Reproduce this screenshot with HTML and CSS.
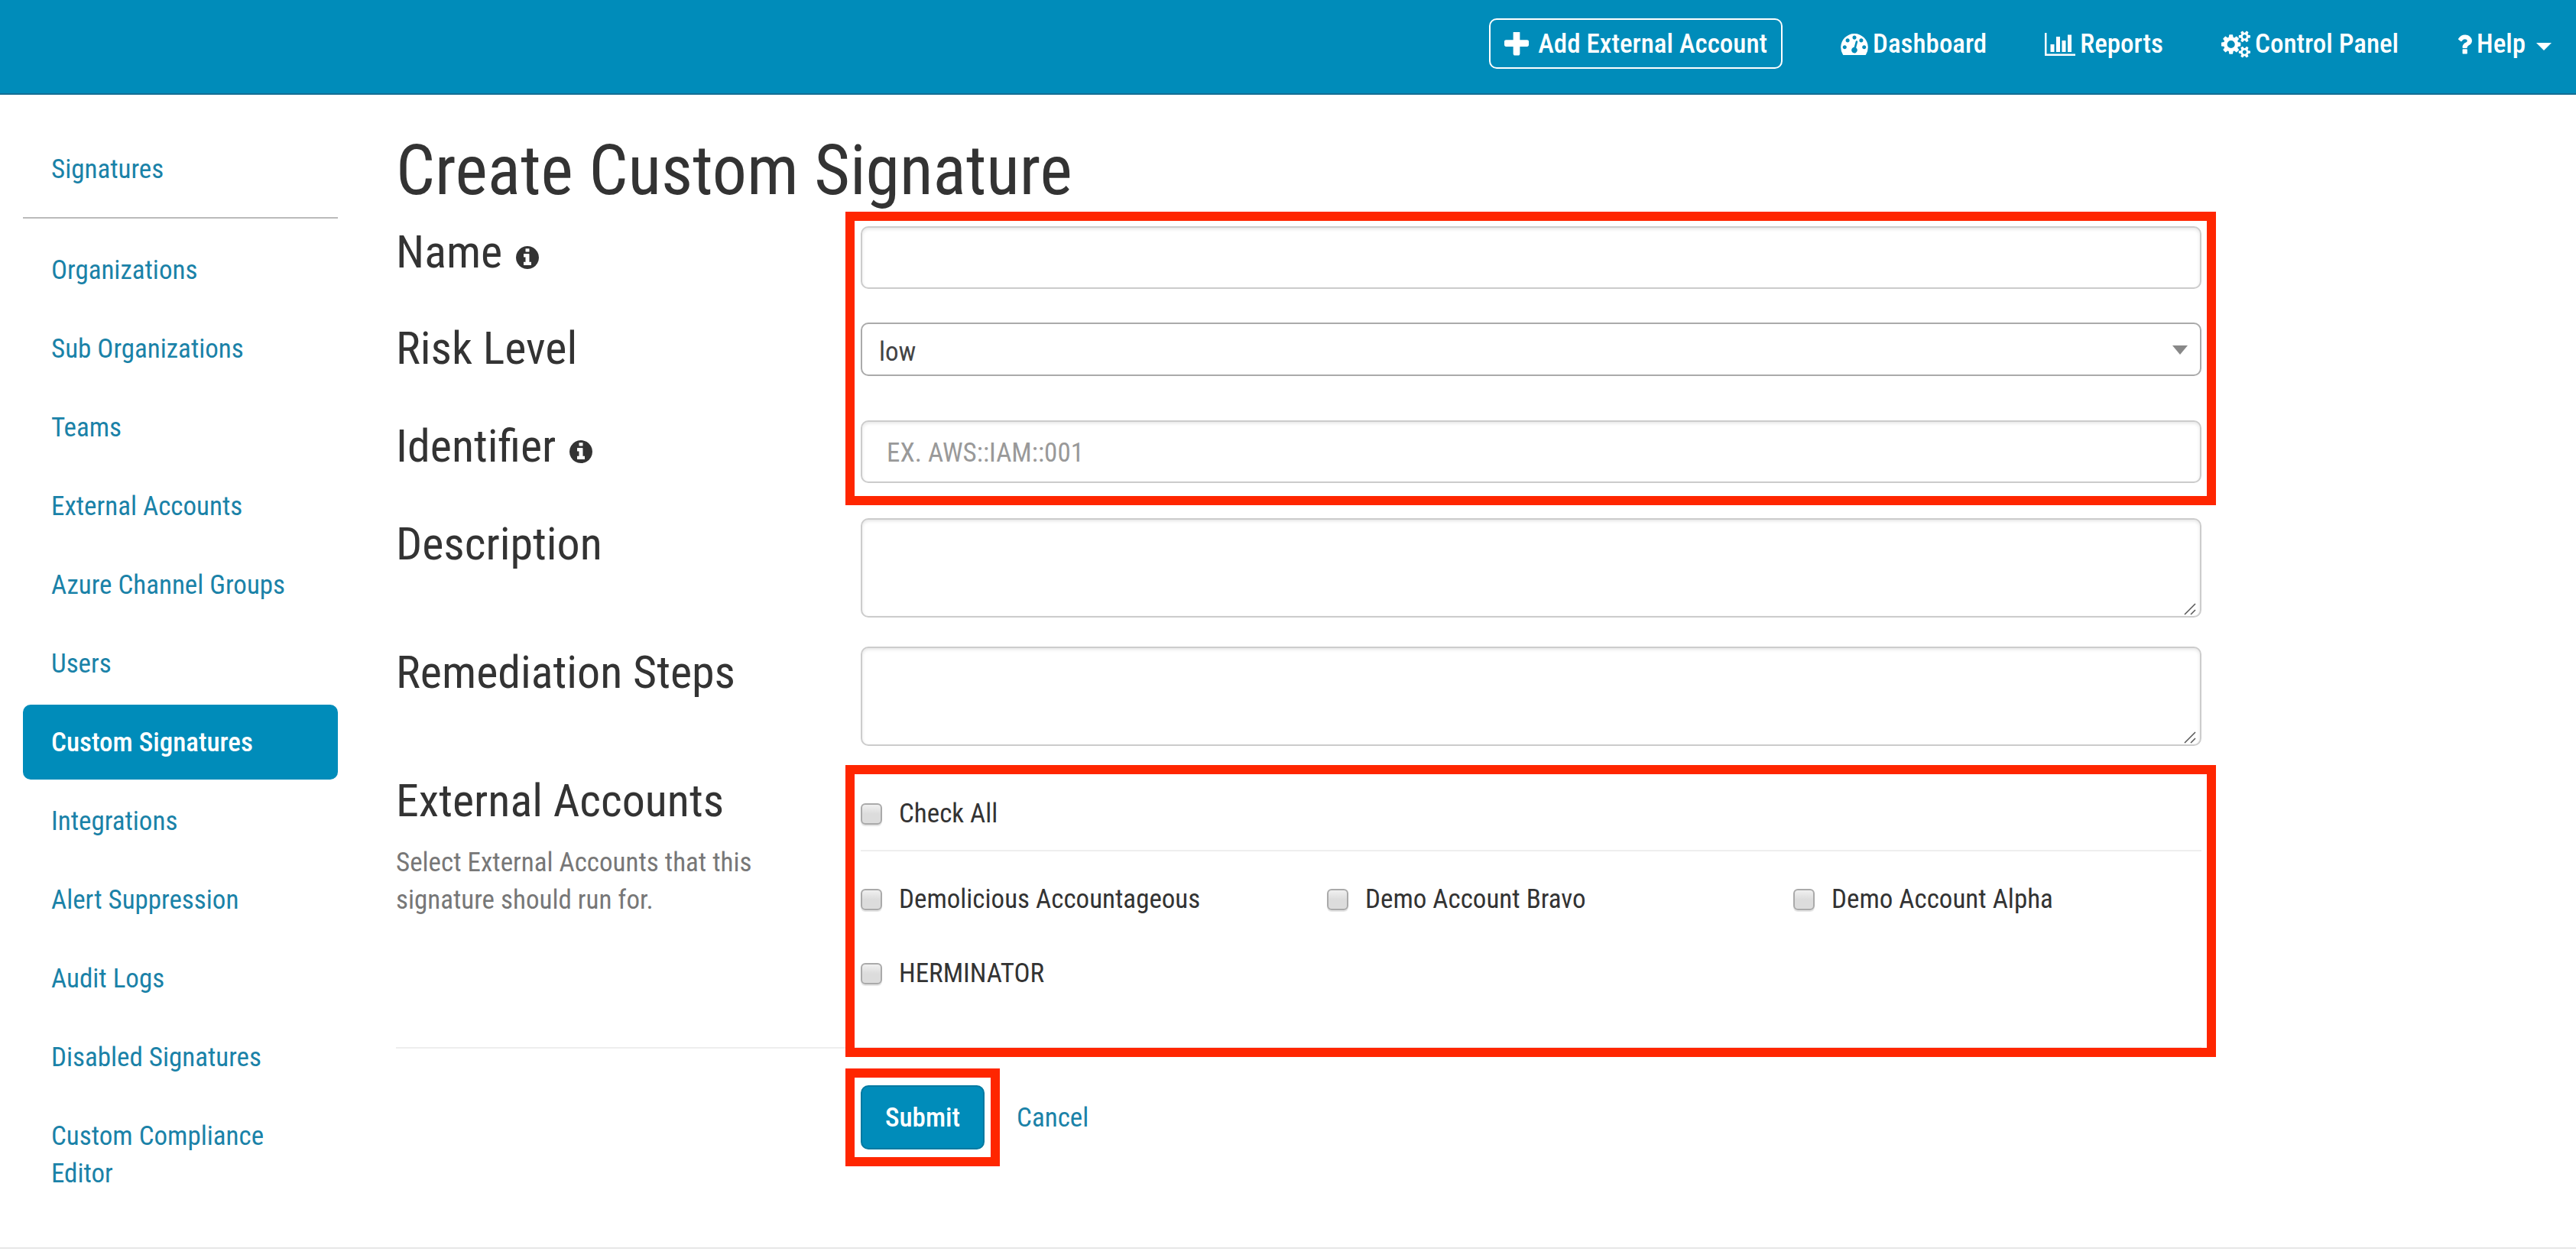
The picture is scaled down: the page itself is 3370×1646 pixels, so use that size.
FILE: index.html
```html
<!DOCTYPE html>
<html lang="en">
<head>
<meta charset="utf-8">
<meta name="viewport" content="width=device-width, initial-scale=1">
<title>Create Custom Signature</title>
<link rel="stylesheet" href="styles.css">
</head>
<body>
<header class="topbar">
  <nav class="topnav" aria-label="Main">
    <a class="topnav__link topnav__link--boxed" href="#"><svg class="icon-plus" viewBox="192 192 1408 1408" aria-hidden="true"><path d="M1600 736v192q0 40-28 68t-68 28h-416v416q0 40-28 68t-68 28h-192q-40 0-68-28t-28-68v-416h-416q-40 0-68-28t-28-68v-192q0-40 28-68t68-28h416v-416q0-40 28-68t68-28h192q40 0 68 28t28 68v416h416q40 0 68 28t28 68z"/></svg>Add External Account</a>
    <a class="topnav__link" href="#"><svg class="icon-dashboard" viewBox="0 256 1792 1408" aria-hidden="true"><path d="M384 1152q0-53-37.5-90.5t-90.5-37.5-90.5 37.5-37.5 90.5 37.5 90.5 90.5 37.5 90.5-37.5 37.5-90.5zm192-448q0-53-37.5-90.5t-90.5-37.5-90.5 37.5-37.5 90.5 37.5 90.5 90.5 37.5 90.5-37.5 37.5-90.5zm428 481l101-382q6-26-7.5-48.5t-38.5-29.5-48 6.5-30 39.5l-101 382q-60 5-107 43.5t-63 98.5q-20 77 20 146t117 89 146-20 89-117q16-60-6-117t-72-91zm660-33q0-53-37.5-90.5t-90.5-37.5-90.5 37.5-37.5 90.5 37.5 90.5 90.5 37.5 90.5-37.5 37.5-90.5zm-640-640q0-53-37.5-90.5t-90.5-37.5-90.5 37.5-37.5 90.5 37.5 90.5 90.5 37.5 90.5-37.5 37.5-90.5zm448 192q0-53-37.5-90.5t-90.5-37.5-90.5 37.5-37.5 90.5 37.5 90.5 90.5 37.5 90.5-37.5 37.5-90.5zm320 448q0 261-141 483-19 29-54 29h-1402q-35 0-54-29-141-221-141-483 0-182 71-348t191-286 286-191 348-71 348 71 286 191 191 286 71 348z"/></svg>Dashboard</a>
    <a class="topnav__link" href="#"><svg class="icon-chart" viewBox="0 128 2048 1536" aria-hidden="true"><path d="M640 896v512h-256v-512h256zm384-512v1024h-256v-1024h256zm1024 1152v128h-2048v-1536h128v1408h1920zm-640-896v768h-256v-768h256zm384-384v1152h-256v-1152h256z"/></svg>Reports</a>
    <a class="topnav__link" href="#"><svg class="icon-cogs" viewBox="0 0 1920 1792" aria-hidden="true"><path d="M896 896q0-106-75-181t-181-75-181 75-75 181 75 181 181 75 181-75 75-181zm768 512q0-52-38-90t-90-38-90 38-38 90q0 53 37.5 90.5t90.5 37.5 90.5-37.5 37.5-90.5zm0-1024q0-52-38-90t-90-38-90 38-38 90q0 53 37.5 90.5t90.5 37.5 90.5-37.5 37.5-90.5zm-384 421v185q0 10-7 19.5t-16 10.5l-155 24q-11 35-32 76 34 48 90 115 7 11 7 20 0 12-7 19-23 30-82.5 89.5t-78.5 59.5q-11 0-21-7l-115-90q-37 19-77 31-11 108-23 155-7 24-30 24h-186q-11 0-20-7.5t-10-17.5l-23-153q-34-10-75-31l-118 89q-7 7-20 7-11 0-21-8-144-133-144-160 0-9 7-19 10-14 41-53t47-61q-23-44-35-82l-152-24q-10-1-17-9.5t-7-19.5v-185q0-10 7-19.5t16-10.5l155-24q11-35 32-76-34-48-90-115-7-11-7-20 0-12 7-20 22-30 82-89t79-59q11 0 21 7l115 90q34-18 77-32 11-108 23-154 7-24 30-24h186q11 0 20 7.5t10 17.5l23 153q34 10 75 31l118-89q8-7 20-7 11 0 21 8 144 133 144 160 0 8-7 19-12 16-42 54t-45 60q23 48 34 82l152 23q10 2 17 10.5t7 19.5zm640 533v140q0 16-149 31-12 27-30 52 51 113 51 138 0 4-4 7-122 71-124 71-8 0-46-47t-52-68q-20 2-30 2t-30-2q-14 21-52 68t-46 47q-2 0-124-71-4-3-4-7 0-25 51-138-18-25-30-52-149-15-149-31v-140q0-16 149-31 13-29 30-52-51-113-51-138 0-4 4-7 4-2 35-20t59-34 30-16q8 0 46 46.5t52 67.5q20-2 30-2t30 2q51-71 92-112l6-2q4 0 124 70 4 3 4 7 0 25-51 138 17 23 30 52 149 15 149 31zm0-1024v140q0 16-149 31-12 27-30 52 51 113 51 138 0 4-4 7-122 71-124 71-8 0-46-47t-52-68q-20 2-30 2t-30-2q-14 21-52 68t-46 47q-2 0-124-71-4-3-4-7 0-25 51-138-18-25-30-52-149-15-149-31v-140q0-16 149-31 13-29 30-52-51-113-51-138 0-4 4-7 4-2 35-20t59-34 30-16q8 0 46 46.5t52 67.5q20-2 30-2t30 2q51-71 92-112l6-2q4 0 124 70 4 3 4 7 0 25-51 138 17 23 30 52 149 15 149 31z"/></svg>Control Panel</a>
    <a class="topnav__link" href="#"><svg class="icon-question" viewBox="384 256 1024 1280" aria-hidden="true"><path d="M1088 1256v240q0 16-12 28t-28 12h-240q-16 0-28-12t-12-28v-240q0-16 12-28t28-12h240q16 0 28 12t12 28zm316-600q0 54-15.5 101t-35 76.5-55 59.5-57.5 43.5-61 35.5q-41 23-68.5 65t-27.5 67q0 17-12 32.5t-28 15.5h-240q-15 0-25.5-18.5t-10.5-37.5v-45q0-83 65-156.5t143-108.5q59-27 84-56t25-76q0-42-46.5-74t-107.5-32q-65 0-108 29-35 25-107 115-13 16-31 16-12 0-25-8l-164-125q-13-10-15.5-25t5.5-28q160-266 464-266 80 0 161 31t146 83 106 127.5 41 158.5z"/></svg>Help<svg class="icon-caret" viewBox="0 0 20 10" aria-hidden="true"><path d="M0 0h20L10 10z"/></svg></a>
  </nav>
</header>

<div class="layout">
  <aside class="sidebar">
    <ul class="menu">
      <li><a class="menu__link" href="#">Signatures</a></li>
    </ul>
    <hr class="sidebar__rule">
    <ul class="menu">
      <li><a class="menu__link" href="#">Organizations</a></li>
      <li><a class="menu__link" href="#">Sub Organizations</a></li>
      <li><a class="menu__link" href="#">Teams</a></li>
      <li><a class="menu__link" href="#">External Accounts</a></li>
      <li><a class="menu__link" href="#">Azure Channel Groups</a></li>
      <li><a class="menu__link" href="#">Users</a></li>
      <li><a class="menu__link menu__link--active" href="#" aria-current="page">Custom Signatures</a></li>
      <li><a class="menu__link" href="#">Integrations</a></li>
      <li><a class="menu__link" href="#">Alert Suppression</a></li>
      <li><a class="menu__link" href="#">Audit Logs</a></li>
      <li><a class="menu__link" href="#">Disabled Signatures</a></li>
      <li><a class="menu__link" href="#">Custom Compliance Editor</a></li>
    </ul>
  </aside>

  <main class="content">
    <h1 class="title">Create Custom Signature</h1>
    <form class="form">
      <div class="group group--basics">
        <div class="row row--first">
          <label class="row__label" for="name">Name <svg class="icon-info" viewBox="128 128 1536 1536" aria-hidden="true"><path d="M1152 1376v-160q0-14-9-23t-23-9h-96v-512q0-14-9-23t-23-9h-320q-14 0-23 9t-9 23v160q0 14 9 23t23 9h96v320h-96q-14 0-23 9t-9 23v160q0 14 9 23t23 9h448q14 0 23-9t9-23zm-128-896v-160q0-14-9-23t-23-9h-192q-14 0-23 9t-9 23v160q0 14 9 23t23 9h192q14 0 23-9t9-23zm640 416q0 209-103 385.5t-279.5 279.5-385.5 103-385.5-103-279.5-279.5-103-385.5 103-385.5 279.5-279.5 385.5-103 385.5 103 279.5 279.5 103 385.5z"/></svg></label>
          <input class="field" id="name" type="text">
        </div>
        <div class="row">
          <label class="row__label" for="risk">Risk Level</label>
          <div class="select">
            <select class="select__control" id="risk">
              <option>low</option>
              <option>medium</option>
              <option>high</option>
            </select>
            <svg class="select__arrow" viewBox="0 0 20 12" aria-hidden="true"><path d="M0 0h20L10 12z"/></svg>
          </div>
        </div>
        <div class="row">
          <label class="row__label" for="identifier">Identifier <svg class="icon-info" viewBox="128 128 1536 1536" aria-hidden="true"><path d="M1152 1376v-160q0-14-9-23t-23-9h-96v-512q0-14-9-23t-23-9h-320q-14 0-23 9t-9 23v160q0 14 9 23t23 9h96v320h-96q-14 0-23 9t-9 23v160q0 14 9 23t23 9h448q14 0 23-9t9-23zm-128-896v-160q0-14-9-23t-23-9h-192q-14 0-23 9t-9 23v160q0 14 9 23t23 9h192q14 0 23-9t9-23zm640 416q0 209-103 385.5t-279.5 279.5-385.5 103-385.5-103-279.5-279.5-103-385.5 103-385.5 279.5-279.5 385.5-103 385.5 103 279.5 279.5 103 385.5z"/></svg></label>
          <input class="field" id="identifier" type="text" placeholder="EX. AWS::IAM::001">
        </div>
      </div>

      <div class="row row--area">
        <label class="row__label" for="description">Description</label>
        <div class="area">
          <textarea class="field field--area" id="description"></textarea>
          <svg class="area__grip" viewBox="0 0 16 16" aria-hidden="true"><path d="M1 15L15 1M9 15l6-6"/></svg>
        </div>
      </div>
      <div class="row row--area">
        <label class="row__label" for="steps">Remediation Steps</label>
        <div class="area">
          <textarea class="field field--area" id="steps"></textarea>
          <svg class="area__grip" viewBox="0 0 16 16" aria-hidden="true"><path d="M1 15L15 1M9 15l6-6"/></svg>
        </div>
      </div>

      <div class="group group--accounts" role="group" aria-labelledby="accounts-label">
        <div class="row">
          <div>
            <h2 class="row__label" id="accounts-label">External Accounts</h2>
            <p class="hint">Select External Accounts that this signature should run for.</p>
          </div>
          <div class="accounts">
            <label class="check check--all"><input class="check__box" type="checkbox">Check All</label>
            <div class="accounts__list">
              <label class="check"><input class="check__box" type="checkbox">Demolicious Accountageous</label>
              <label class="check"><input class="check__box" type="checkbox">Demo Account Bravo</label>
              <label class="check"><input class="check__box" type="checkbox">Demo Account Alpha</label>
              <label class="check"><input class="check__box" type="checkbox">HERMINATOR</label>
            </div>
          </div>
        </div>
      </div>

      <div class="actions">
        <div class="actions__submit"><button class="button" type="submit">Submit</button></div>
        <a class="link" href="#">Cancel</a>
      </div>
    </form>
  </main>
</div>
<hr class="page-rule">
</body>
</html>
```

FILE: styles.css
```css
:root {
  --blue: #008cba;
  --blue-dark: #0079a1;
  --link: #1a82a8;
  --text: #333;
  --mark: #ff2600;
  --label-col: 532px;
  --gutter: 76px;
}

* { box-sizing: border-box; }

body {
  margin: 0;
  background: #fff;
  color: var(--text);
  font-family: "Roboto Condensed", "Liberation Sans Narrow", Roboto, sans-serif;
  font-size: 35px;
  line-height: 49px;
}

a { text-decoration: none; }

/* Top bar */
.topbar {
  padding: 24px 32px 32px;
  background: var(--blue);
  border-bottom: 2px solid #146d93;
}

.topnav {
  display: flex;
  justify-content: flex-end;
  gap: 76px;
}

.topnav__link {
  display: flex;
  align-items: center;
  gap: 6px;
  padding: 9px 0 8px;
  color: #fff;
  font-weight: 500;
  white-space: nowrap;
}

.topnav__link svg { fill: currentColor; }

.topnav__link--boxed {
  gap: 12px;
  padding: 7px 18px 6px;
  border: 2px solid #fff;
  border-radius: 10px;
}

.icon-plus { width: 32px; height: 32px; }
.icon-dashboard { width: 36px; height: 28px; }
.icon-chart { width: 40px; height: 30px; }
.icon-cogs { width: 38px; height: 36px; }
.icon-question { width: 20px; height: 26px; }
.icon-caret { width: 20px; height: 10px; margin: 6px 0 0 8px; }

/* Page columns */
.layout {
  display: flex;
  gap: 76px;
  padding: 48px 30px;
}

.sidebar { flex: 0 0 412px; }

.sidebar__rule {
  height: 2px;
  margin: 14px 0 18px;
  border: 0;
  background: #bbb;
}

.menu {
  display: flex;
  flex-direction: column;
  gap: 5px;
  margin: 0;
  padding: 0;
  list-style: none;
}

.menu__link {
  display: block;
  padding: 25px 37px 24px;
  border-radius: 10px;
  color: var(--link);
}

.menu__link--active {
  background: var(--blue);
  color: #fff;
  font-weight: 500;
}

.content {
  flex: 1;
  max-width: 2362px;
  padding-top: 4px;
}

.title {
  margin: 0 0 24px;
  font-size: 90px;
  font-weight: 400;
  line-height: 96px;
}

/* Form rows */
.group { position: relative; }

.group::after,
.actions__submit::after {
  content: "";
  position: absolute;
  border: 12px solid var(--mark);
  pointer-events: none;
}

.group--basics::after { inset: -19px -19px 17px 588px; }
.group--accounts::after { inset: -13px -19px -13px 588px; }
.actions__submit::after { inset: -22px -20px; }

.row {
  display: grid;
  grid-template-columns: var(--label-col) minmax(0, 1fr);
  column-gap: var(--gutter);
  align-items: start;
  min-height: 128px;
}

.row--first { min-height: 126px; }
.row--area { min-height: 168px; }

.row__label {
  margin: 0;
  font-size: 60px;
  font-weight: 400;
  line-height: 68px;
}

.icon-info {
  width: 30px;
  height: 30px;
  margin-left: 4px;
  fill: var(--text);
  vertical-align: -2px;
}

.field {
  display: block;
  width: 100%;
  height: 82px;
  padding: 2px 32px 0;
  border: 2px solid #ccc;
  border-radius: 10px;
  background: #fff;
  box-shadow: inset 0 2px 4px rgba(0, 0, 0, 0.1);
  color: var(--text);
  font: inherit;
}

.field::placeholder { color: #999; opacity: 1; }

.field--area {
  height: 130px;
  padding: 16px 32px;
  resize: none;
}

.area { position: relative; }

.area__grip {
  position: absolute;
  right: 7px;
  bottom: 3px;
  width: 16px;
  height: 16px;
  fill: none;
  stroke: #555;
  stroke-width: 1.5;
}

.select { position: relative; }

.select__control {
  display: block;
  width: 100%;
  height: 70px;
  padding: 6px 60px 0 22px;
  border: 2px solid #aaa;
  border-radius: 10px;
  background: #fff;
  color: #444;
  font: inherit;
  appearance: none;
}

.select__arrow {
  position: absolute;
  top: 30px;
  right: 18px;
  width: 20px;
  height: 12px;
  fill: #888;
  pointer-events: none;
}

/* Account list */
.group--accounts {
  padding-bottom: 72px;
  border-bottom: 2px solid #eee;
}

.hint {
  margin: 22px 0 0;
  color: #777;
}

.accounts { padding-top: 26px; }

.accounts__list {
  display: grid;
  grid-template-columns: repeat(3, 1fr);
  gap: 48px var(--gutter);
  padding-top: 38px;
}

.check {
  display: flex;
  align-items: center;
  gap: 22px;
}

.check--all {
  padding-bottom: 23px;
  border-bottom: 2px solid #eee;
}

.check__box {
  flex: none;
  width: 28px;
  height: 28px;
  margin: 0;
  border: 2px solid #aaa;
  border-radius: 6px;
  background: linear-gradient(#f0f0f0, #dcdcdc 50%);
  box-shadow: 0 2px 1px #e4e4e4;
  appearance: none;
}

/* Buttons */
.actions {
  display: flex;
  align-items: center;
  gap: 42px;
  margin: 48px 0 0 calc(var(--label-col) + var(--gutter));
}

.actions__submit { position: relative; }

.button {
  display: block;
  padding: 16px 30px 15px;
  border: 2px solid var(--blue-dark);
  border-radius: 10px;
  background: var(--blue);
  color: #fff;
  font: inherit;
  font-weight: 500;
}

.link { color: var(--link); }

.page-rule {
  height: 2px;
  margin: 0;
  border: 0;
  background: #e7e7e7;
}
```
